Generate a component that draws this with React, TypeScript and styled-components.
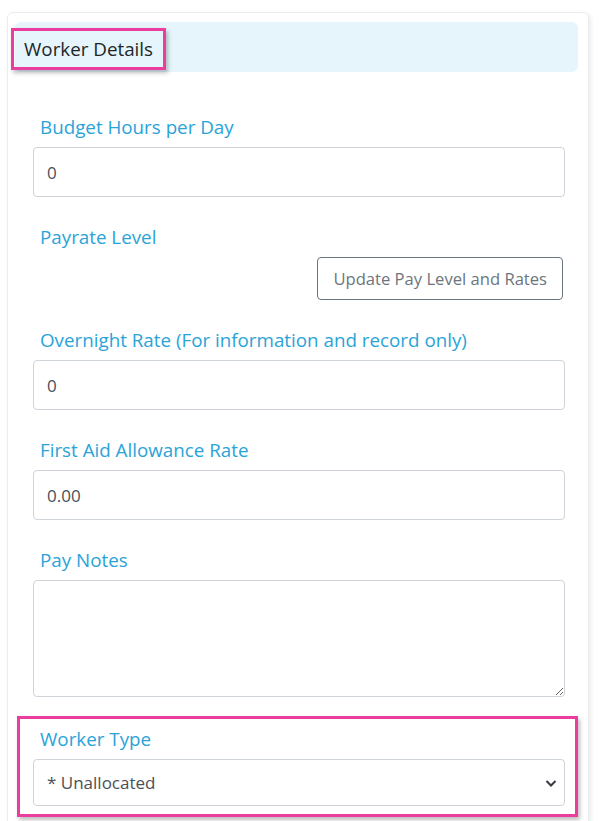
import React from 'react';
import styled, { createGlobalStyle } from 'styled-components';

const GlobalStyle = createGlobalStyle`
	body {
		margin: 0;
		background: #fff;
		font-family: 'Open Sans', 'Noto Sans', sans-serif;
	}
`;

const Card = styled.div`
	margin: 12px 0 0 7px;
	width: 582px;
	box-sizing: border-box;
	border: 1px solid #ececec;
	border-radius: 6px;
	box-shadow: 2px 2px 4px rgba(0, 0, 0, 0.08);
	padding: 9px 10px 40px 7px;
`;

const Header = styled.div`
	height: 50px;
	background: #e5f5fb;
	border-radius: 6px;
	display: flex;
	align-items: center;
`;

const Title = styled.h2`
	margin: 4px 0 0 -4px;
	height: 42px;
	box-sizing: border-box;
	padding: 0 10px;
	display: flex;
	align-items: center;
	border: 3px solid #ea3d9f;
	box-shadow: 2px 3px 4px rgba(0, 0, 0, 0.25);
	font-size: 18.8px;
	font-weight: 400;
	color: #212529;
`;

const Body = styled.div`
	padding: 41px 13px 0 18px;
`;

const Group = styled.div<{ $highlight?: boolean }>`
	display: flex;
	flex-direction: column;
	margin-bottom: ${p => (p.$highlight ? '0' : '26px')};
	${p =>
		p.$highlight &&
		`
		margin: -7px -13px 0 -16px;
		padding: 6px 10px 8px 13px;
		border: 3px solid #ea3d9f;
		box-shadow: 2px 3px 4px rgba(0, 0, 0, 0.25);
	`}
`;

const Label = styled.label`
	display: block;
	height: 28px;
	line-height: 28px;
	padding-left: 7px;
	margin-bottom: 6px;
	font-size: 18.8px;
	color: #2aa3d8;
`;

const fieldBase = `
	box-sizing: border-box;
	width: 100%;
	border: 1px solid #ced4da;
	border-radius: 4px;
	padding: 0 13px;
	font-family: 'Open Sans', 'Noto Sans', sans-serif;
	font-size: 17px;
	color: #495057;
	background: #fff;
	outline: none;
`;

const Input = styled.input`
	${fieldBase}
	height: 50px;
`;

const TextArea = styled.textarea`
	${fieldBase}
	display: block;
	height: 117px;
	padding: 8px 13px;
`;

const SelectWrap = styled.div`
	position: relative;
`;

const Select = styled.select`
	${fieldBase}
	height: 47px;
	appearance: none;
	padding-left: 13px;
`;

const Chevron = styled.svg`
	position: absolute;
	right: 8px;
	top: 19px;
	pointer-events: none;
`;

const ButtonRow = styled.div`
	display: flex;
	justify-content: flex-end;
	padding-right: 2px;
`;

const Button = styled.button`
	height: 43px;
	padding: 0 15px;
	border: 1px solid #6c757d;
	border-radius: 4px;
	background: #fff;
	color: #6c757d;
	font-family: 'Open Sans', 'Noto Sans', sans-serif;
	font-size: 16.6px;
	cursor: pointer;
`;

export default function App() {
	return (
		<>
			<GlobalStyle />
			<Card>
				<Header>
					<Title>Worker Details</Title>
				</Header>
				<Body>
					<Group>
						<Label>Budget Hours per Day</Label>
						<Input defaultValue="0" />
					</Group>
					<Group>
						<Label>Payrate Level</Label>
						<ButtonRow>
							<Button>Update Pay Level and Rates</Button>
						</ButtonRow>
					</Group>
					<Group>
						<Label>Overnight Rate (For information and record only)</Label>
						<Input defaultValue="0" />
					</Group>
					<Group>
						<Label>First Aid Allowance Rate</Label>
						<Input defaultValue="0.00" />
					</Group>
					<Group>
						<Label>Pay Notes</Label>
						<TextArea />
					</Group>
					<Group $highlight>
						<Label>Worker Type</Label>
						<SelectWrap>
							<Select defaultValue="unallocated">
								<option value="unallocated">* Unallocated</option>
							</Select>
							<Chevron width="12" height="10" viewBox="0 0 12 10">
								<path d="M1.5 3l4.5 4.5L10.5 3" fill="none" stroke="#343a40" strokeWidth="2" />
							</Chevron>
						</SelectWrap>
					</Group>
				</Body>
			</Card>
		</>
	);
}
